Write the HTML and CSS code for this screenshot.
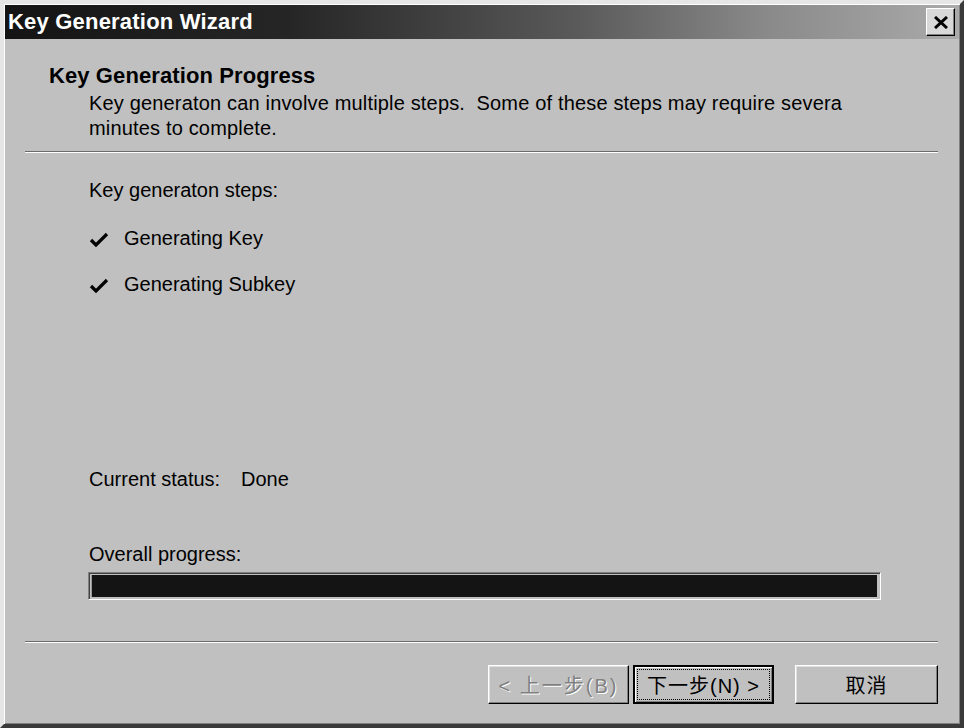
FILE: index.html
```html
<!DOCTYPE html>
<html lang="en">
<head>
    <meta charset="UTF-8">
    <title>Key Generation Wizard</title>
    <link rel="stylesheet" href="styles.css">
</head>
<body>
    <div class="window">
        <div class="titlebar">
            <span class="title">Key Generation Wizard</span>
            <button class="close-btn" title="Close">
                <svg width="14" height="13" viewBox="0 0 14 13">
                    <path d="M1 1 L13 12 M13 1 L1 12" stroke="#000" stroke-width="3" fill="none"/>
                </svg>
            </button>
        </div>

        <div class="header">
            <h1>Key Generation Progress</h1>
            <p>Key generaton can involve multiple steps.&nbsp; Some of these steps may require severa<br>minutes to complete.</p>
        </div>
        <div class="separator"></div>

        <div class="content">
            <div class="label">Key generaton steps:</div>
            <ul class="steps">
                <li>
                    <svg class="check" width="20" height="16" viewBox="0 0 20 16">
                        <path d="M2 8 L7 13 L18 2" stroke="#000" stroke-width="3.2" fill="none"/>
                    </svg>
                    Generating Key
                </li>
                <li>
                    <svg class="check" width="20" height="16" viewBox="0 0 20 16">
                        <path d="M2 8 L7 13 L18 2" stroke="#000" stroke-width="3.2" fill="none"/>
                    </svg>
                    Generating Subkey
                </li>
            </ul>

            <div class="status">
                <span class="status-label">Current status:</span>
                <span>Done</span>
            </div>

            <div class="label progress-label">Overall progress:</div>
            <div class="progress">
                <div class="progress-fill" style="width: 100%;"></div>
            </div>
        </div>

        <div class="separator"></div>

        <div class="button-row">
            <button class="btn" disabled>&lt; 上一步(B)</button>
            <button class="btn btn-default"><span class="focus">下一步(N) &gt;</span></button>
            <button class="btn btn-cancel">取消</button>
        </div>
    </div>
</body>
</html>
```

FILE: styles.css
```css
* {
    margin: 0;
    padding: 0;
    box-sizing: border-box;
}

body {
    font-family: 'Liberation Sans', 'Noto Sans CJK SC', sans-serif;
    font-size: 20px;
    color: #000;
    background: #c0c0c0;
    width: 964px;
    height: 728px;
    overflow: hidden;
}

.window {
    width: 964px;
    height: 728px;
    background: #c0c0c0;
    border: 4px solid;
    border-color: #e6e6e6 #3a3a3a #3a3a3a #e6e6e6;
    padding: 1px 1px 0 1px;
    box-shadow: inset 1px 1px 0 #ffffff, inset -1px -1px 0 #808080;
}

/* title bar */
.titlebar {
    height: 34px;
    display: flex;
    align-items: center;
    justify-content: space-between;
    padding: 0 4px 0 3px;
    background: linear-gradient(to right, #141414 0%, #262626 30%, #5a5a5a 60%, #8a8a8a 80%, #aaaaaa 100%);
}

.title {
    color: #fff;
    font-weight: bold;
    font-size: 22px;
    letter-spacing: 0.2px;
}

.close-btn {
    width: 29px;
    height: 28px;
    display: flex;
    align-items: center;
    justify-content: center;
    background: #d8d8d8;
    border: 1px solid;
    border-color: #ffffff #000000 #000000 #ffffff;
    box-shadow: inset -1px -1px 0 #808080;
}

/* header */
.header {
    padding: 25px 0 0 44px;
    height: 112px;
}

.header h1 {
    font-size: 22px;
    font-weight: bold;
    line-height: 24px;
    letter-spacing: 0.1px;
}

.header p {
    margin-top: 3px;
    padding-left: 40px;
    line-height: 25px;
    letter-spacing: 0.17px;
}

.separator {
    margin: 0 21px 0 20px;
    height: 2px;
    border-top: 1px solid #6a6a6a;
    border-bottom: 1px solid #ffffff;
}

/* body */
.content {
    padding: 25px 0 0 84px;
    height: 488px;
}

.label {
    line-height: 24px;
}

.steps {
    list-style: none;
    margin-top: 24px;
}

.steps li {
    display: flex;
    align-items: center;
    line-height: 24px;
    margin-bottom: 22px;
}

.check {
    margin: 3px 15px 0 0;
}

.status {
    margin-top: 171px;
    line-height: 24px;
    display: flex;
}

.status-label {
    width: 152px;
}

.progress-label {
    margin-top: 51px;
}

.progress {
    margin-top: 6px;
    width: 793px;
    height: 28px;
    margin-left: -1px;
    border: 1px solid;
    border-color: #808080 #ffffff #ffffff #808080;
    padding: 2px 3px 2px 2px;
    background: #c0c0c0;
    box-shadow: inset 1px 1px 0 #404040;
}

.progress-fill {
    height: 100%;
    background: #141414;
    border-left: 1px solid #9a9a9a;
}

/* buttons */
.button-row {
    display: flex;
    justify-content: flex-end;
    padding: 22px 21px 0 0;
}

.btn {
    width: 141px;
    height: 39px;
    font-family: 'Liberation Sans', 'Noto Sans CJK SC', sans-serif;
    font-size: 20px;
    letter-spacing: 1px;
    background: #c0c0c0;
    color: #000;
    border: 1px solid;
    border-color: #ffffff #000000 #000000 #ffffff;
    box-shadow: inset -1px -1px 0 #808080, inset 1px 1px 0 #dfdfdf;
    display: flex;
    align-items: center;
    justify-content: center;
}

.btn:disabled {
    color: #808080;
    text-shadow: 1px 1px 0 #ffffff;
    letter-spacing: 2px;
}

.btn-default {
    margin-left: 4px;
    border: 2px solid #000;
    box-shadow: inset 1px 1px 0 #ffffff, inset -1px -1px 0 #808080;
    padding: 3px;
}

.focus {
    display: flex;
    align-items: center;
    justify-content: center;
    width: 100%;
    height: 100%;
    outline: 1px dotted #000;
}

.btn-cancel {
    margin-left: 21px;
    width: 143px;
}
```
